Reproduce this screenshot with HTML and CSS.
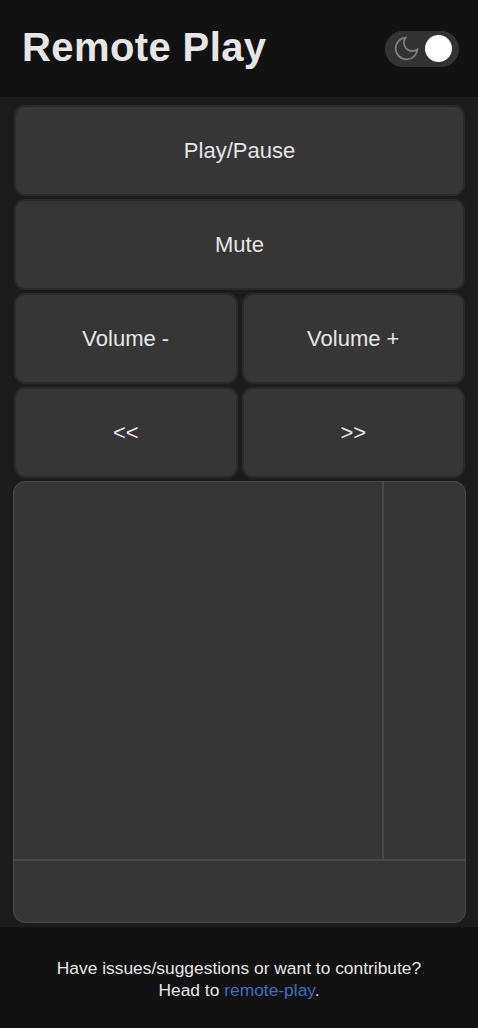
FILE: index.html
```html
<!DOCTYPE html>
<html lang="en">
<head>
<meta charset="utf-8">
<title>Remote Play</title>
<link rel="stylesheet" href="styles.css">
</head>
<body>
<header class="header">
  <h1 class="title">Remote Play</h1>
  <div class="toggle">
    <svg class="moon" viewBox="0 0 24 24" width="29" height="29"><path d="M21 12.79A9 9 0 1 1 11.21 3 7 7 0 0 0 21 12.79z"/></svg>
    <span class="knob"></span>
  </div>
</header>
<main class="main">
  <div class="controls">
    <button class="btn wide">Play/Pause</button>
    <button class="btn wide">Mute</button>
    <button class="btn">Volume -</button>
    <button class="btn">Volume +</button>
    <button class="btn">&lt;&lt;</button>
    <button class="btn">&gt;&gt;</button>
  </div>
  <div class="touchpad">
    <div class="pad-main"></div>
    <div class="pad-scroll"></div>
    <div class="pad-bottom"></div>
  </div>
</main>
<footer class="footer">
  <p>Have issues/suggestions or want to contribute?<br>Head to <a href="#">remote-play</a>.</p>
</footer>
</body>
</html>
```
FILE: styles.css
```css
* { box-sizing: border-box; }
html, body { margin: 0; padding: 0; }
body {
  background: #1c1c1c;
  font-family: "Liberation Sans", Arial, sans-serif;
  color: #e6e6e6;
}
.header {
  background: #121212;
  height: 97px;
  display: flex;
  align-items: center;
  justify-content: space-between;
  padding: 0 19px 0 22px;
}
.title {
  margin: 0;
  font-size: 40px;
  font-weight: bold;
  letter-spacing: 0.4px;
  color: #e6e6e6;
  padding-bottom: 2px;
}
.toggle {
  width: 74px;
  height: 36px;
  border-radius: 18px;
  background: #333333;
  display: flex;
  align-items: center;
  justify-content: space-between;
  padding: 0 7px 0 7px;
}
.moon {
  fill: none;
  stroke: #7f7f7f;
  stroke-width: 1.4;
}
.knob {
  width: 27px;
  height: 27px;
  border-radius: 50%;
  background: #ffffff;
}
.main {
  padding: 8px 12px 4px 13px;
}
.controls {
  display: grid;
  grid-template-columns: 1fr 1fr;
  gap: 3px 4px;
  padding: 0 1px;
}
.btn {
  height: 91px;
  background: #363636;
  border: 2px solid #2a2a2a;
  border-radius: 11px;
  color: #e6e6e6;
  font-family: "Liberation Sans", Arial, sans-serif;
  font-size: 22px;
  padding: 0 0 0 0;
  line-height: 1;
}
.btn.wide { grid-column: 1 / span 2; }
.touchpad {
  margin-top: 3px;
  height: 442px;
  background: #363636;
  border: 1px solid #4b4b4b;
  border-radius: 12px;
  display: grid;
  grid-template-columns: 1fr 81px;
  grid-template-rows: 1fr 61px;
  overflow: hidden;
}
.pad-main { border-right: 2px solid #484848; border-bottom: 2px solid #484848; }
.pad-scroll { border-bottom: 2px solid #484848; }
.pad-bottom { grid-column: 1 / span 2; }
.footer {
  background: #121212;
  height: 103px;
  padding-top: 30px;
  text-align: center;
}
.footer p {
  margin: 0;
  font-size: 17.4px;
  line-height: 22px;
}
.footer a {
  color: #3d6fc1;
  text-decoration: none;
}
```
